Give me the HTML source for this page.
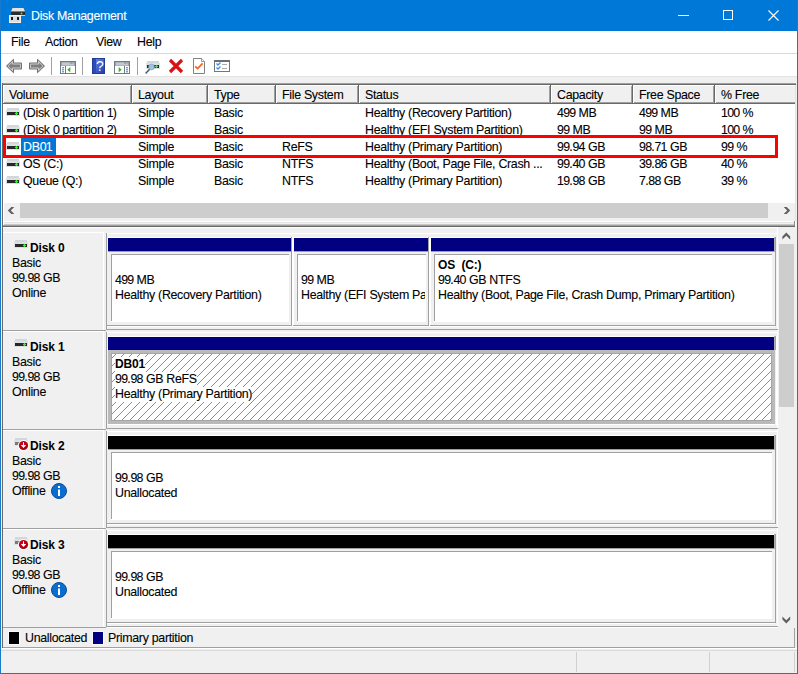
<!DOCTYPE html>
<html><head><meta charset="utf-8">
<style>
*{margin:0;padding:0;box-sizing:border-box}
html,body{width:798px;height:674px;overflow:hidden;background:#f0f0f0}
body{position:relative;font-family:"Liberation Sans",sans-serif;font-size:12.4px;letter-spacing:-0.3px;color:#000;-webkit-text-stroke:0.1px currentColor}
i{font-style:normal;letter-spacing:-0.75px}
.a{position:absolute}
.t{position:absolute;white-space:nowrap;line-height:15px}
.b{position:absolute;white-space:nowrap;line-height:15px;font-weight:bold;font-size:12px;letter-spacing:-0.15px;-webkit-text-stroke:0}
svg{position:absolute;overflow:visible}
</style></head><body>
<div class="a" style="left:0px;top:0px;width:798px;height:31px;background:#0078d7;"></div>
<svg style="left:0px;top:0px" width="30" height="30" viewBox="0 0 30 30">
<path d="M12.5 8 H23.5 L25 11.5 H11 Z" fill="#e4e4e4"/>
<rect x="11" y="11.7" width="14" height="3.3" fill="#2c2c2c"/>
<rect x="11" y="15" width="14" height="1" fill="#cfcfcf"/>
<circle cx="21.5" cy="13.4" r="1" fill="#3cf03c"/>
<rect x="9" y="15" width="12" height="8" fill="#dcdcdc"/>
<rect x="9.5" y="15.5" width="11" height="7" fill="none" stroke="#f2f2f2" stroke-width="1"/>
<rect x="11" y="17" width="2" height="3" fill="#1c1c1c"/>
<rect x="17" y="17" width="2" height="3" fill="#1c1c1c"/>
</svg>
<div class="t" style="left:31px;top:9px;color:#fff">Disk Management</div>
<svg style="left:678px;top:15px" width="11" height="1"><rect width="11" height="1" fill="#fff"/></svg>
<svg style="left:723px;top:10px" width="11" height="11"><rect x="0.5" y="0.5" width="9" height="9" fill="none" stroke="#fff" stroke-width="1"/></svg>
<svg style="left:768px;top:10px" width="12" height="12"><path d="M0.5 0.5 L10.5 10.5 M10.5 0.5 L0.5 10.5" stroke="#fff" stroke-width="1.1"/></svg>
<div class="a" style="left:0px;top:0px;width:1px;height:674px;background:#1979ca;"></div>
<div class="a" style="left:797px;top:0px;width:1px;height:674px;background:#1979ca;"></div>
<div class="a" style="left:0px;top:673px;width:798px;height:1px;background:#1979ca;"></div>
<div class="a" style="left:1px;top:31px;width:796px;height:22px;background:#fff;"></div>
<div class="t" style="left:11px;top:35px;">File</div>
<div class="t" style="left:45px;top:35px;">Action</div>
<div class="t" style="left:96px;top:35px;">View</div>
<div class="t" style="left:137px;top:35px;">Help</div>
<div class="a" style="left:1px;top:53px;width:796px;height:1px;background:#d9d9d9;"></div>
<div class="a" style="left:1px;top:54px;width:796px;height:22px;background:#fff;"></div>
<div class="a" style="left:1px;top:76px;width:796px;height:1px;background:#e3e3e3;"></div>
<div class="a" style="left:1px;top:77px;width:796px;height:6px;background:#f0f0f0;"></div>

<svg style="left:6px;top:58px" width="17" height="16" viewBox="0 0 17 16">
<defs><linearGradient id="ga" x1="0" y1="0" x2="0" y2="1"><stop offset="0" stop-color="#b0b0b0"/><stop offset="0.5" stop-color="#7a7a7a"/><stop offset="1" stop-color="#b0b0b0"/></linearGradient></defs>
<path d="M0.5 8 L7.5 1.3 V5 H15.5 V11 H7.5 V14.7 Z" fill="url(#ga)" stroke="#707070" stroke-width="1" stroke-linejoin="round"/><path d="M2 8 L6.5 3.6 V6 H14.5 V10 H6.5 V12.4 Z" fill="none" stroke="#e0e0e0" stroke-width="0.7"/></svg>
<svg style="left:28px;top:58px" width="17" height="16" viewBox="0 0 17 16">
<path d="M16.5 8 L9.5 1.3 V5 H1.5 V11 H9.5 V14.7 Z" fill="url(#ga)" stroke="#707070" stroke-width="1" stroke-linejoin="round"/><path d="M15 8 L10.5 3.6 V6 H2.5 V10 H10.5 V12.4 Z" fill="none" stroke="#e0e0e0" stroke-width="0.7"/></svg>
<svg style="left:51px;top:57px" width="1" height="18"><rect width="1" height="18" fill="#a0a0a0"/></svg>
<svg style="left:60px;top:61px" width="16" height="13" viewBox="0 0 16 13">
<rect x="0.5" y="0.5" width="15" height="12" fill="#fff" stroke="#737b88"/><rect x="1" y="1" width="14" height="4" fill="#7d8593"/>
<rect x="1.5" y="1.5" width="9" height="1.2" fill="#dfe4ea"/><rect x="11.5" y="1.5" width="1.2" height="1.2" fill="#dfe4ea"/><rect x="13.3" y="1.5" width="1.2" height="1.2" fill="#dfe4ea"/>
<rect x="1.5" y="3.3" width="13" height="1.2" fill="#dfe4ea"/><rect x="5" y="5" width="1" height="7" fill="#737b88"/>
<rect x="2" y="6.3" width="2" height="1" fill="#3a78c8"/><rect x="2" y="8.3" width="2" height="1" fill="#3a78c8"/><rect x="2" y="10.3" width="2" height="1" fill="#3a78c8"/>
<path d="M10.3 6 L7.3 8.7 L10.3 11.3 Z" fill="#2fb02f"/></svg>
<svg style="left:82px;top:57px" width="1" height="18"><rect width="1" height="18" fill="#a0a0a0"/></svg>
<svg style="left:92px;top:58px" width="14" height="16" viewBox="0 0 14 16">
<defs><linearGradient id="gh" x1="0" y1="0" x2="1" y2="1"><stop offset="0" stop-color="#6d8fe8"/><stop offset="1" stop-color="#1c3aa8"/></linearGradient></defs>
<rect x="0.5" y="0.5" width="12" height="15" fill="url(#gh)" stroke="#203c9c"/>
<rect x="1" y="1" width="3" height="14" fill="#2a4bb8"/><text x="7.8" y="13" font-family="Liberation Sans" font-size="14" fill="#fff" text-anchor="middle" style="-webkit-text-stroke:0.3px #fff">?</text></svg>
<svg style="left:114px;top:61px" width="16" height="13" viewBox="0 0 16 13">
<rect x="0.5" y="0.5" width="15" height="12" fill="#fff" stroke="#737b88"/><rect x="1" y="1" width="14" height="4" fill="#7d8593"/>
<rect x="1.5" y="1.5" width="9" height="1.2" fill="#dfe4ea"/><rect x="11.5" y="1.5" width="1.2" height="1.2" fill="#dfe4ea"/><rect x="13.3" y="1.5" width="1.2" height="1.2" fill="#dfe4ea"/>
<rect x="1.5" y="3.3" width="13" height="1.2" fill="#dfe4ea"/><rect x="10" y="5" width="1" height="7" fill="#737b88"/>
<rect x="12" y="6.3" width="2" height="1" fill="#3a78c8"/><rect x="12" y="8.3" width="2" height="1" fill="#3a78c8"/><rect x="12" y="10.3" width="2" height="1" fill="#3a78c8"/>
<path d="M4.7 6 L7.7 8.7 L4.7 11.3 Z" fill="#2fb02f"/></svg>
<svg style="left:137px;top:57px" width="1" height="18"><rect width="1" height="18" fill="#a0a0a0"/></svg>
<svg style="left:140px;top:56px" width="24" height="20" viewBox="0 0 24 20">
<rect x="7" y="5" width="12" height="2.5" fill="#d3d6da"/><rect x="6" y="7" width="14" height="6" fill="#dde0e3"/><rect x="7" y="9" width="12" height="3" fill="#282828"/>
<rect x="15.5" y="9.5" width="2" height="2" fill="#33ee33"/><rect x="16" y="9" width="1" height="3" fill="#33ee33"/><rect x="15" y="10" width="3" height="1" fill="#33ee33"/>
<circle cx="11.5" cy="11" r="2.9" fill="#9fc3e3" stroke="#7d9dbb" stroke-width="0.6"/><path d="M9.6 13.3 L5.6 17.6" stroke="#3f5878" stroke-width="1.5"/></svg>
<svg style="left:168px;top:58px" width="16" height="16" viewBox="0 0 16 16">
<path d="M2 2 L14 14 M14 2 L2 14" stroke="#d81313" stroke-width="3.2"/></svg>
<svg style="left:193px;top:58px" width="13" height="16" viewBox="0 0 13 16">
<path d="M0.5 0.5 H8.5 L11.5 3.5 V15.5 H0.5 Z" fill="#fff" stroke="#808080"/><path d="M8.5 0.5 V3.5 H11.5" fill="#f4f4f4" stroke="#808080" stroke-width="0.8"/>
<path d="M2.2 8.3 L4.6 10.6 L9.6 5.3" fill="none" stroke="#f0641e" stroke-width="1.7"/></svg>
<svg style="left:214px;top:60px" width="16" height="12" viewBox="0 0 16 12">
<rect x="0.5" y="0.5" width="15" height="11" fill="#fff" stroke="#777"/><rect x="0" y="0" width="16" height="2" fill="#6e6e6e"/>
<path d="M2.5 3.5 L4 5 L6.5 2.5 M2.5 7.5 L4 9 L6.5 6.5" fill="none" stroke="#3c8fe6" stroke-width="1.3"/>
<rect x="8" y="4" width="5" height="1" fill="#aaa"/><rect x="8" y="8" width="5" height="1" fill="#aaa"/></svg>

<div class="a" style="left:2px;top:83px;width:794px;height:143px;background:#fff;"></div>
<div class="a" style="left:2px;top:83px;width:794px;height:1px;background:#a0a0a0;"></div>
<div class="a" style="left:2px;top:84px;width:794px;height:1px;background:#696969;"></div>
<div class="a" style="left:2px;top:83px;width:1px;height:566px;background:#696969;"></div>
<div class="a" style="left:3px;top:85px;width:792px;height:18px;background:#f0f0f0;"></div>
<div class="a" style="left:3px;top:85px;width:792px;height:1px;background:#fff;"></div>
<div class="a" style="left:3px;top:102px;width:792px;height:1px;background:#a0a0a0;"></div>
<div class="a" style="left:3px;top:103px;width:792px;height:1px;background:#696969;"></div>
<div class="a" style="left:3px;top:85px;width:1px;height:18px;background:#fff;"></div>
<div class="a" style="left:130px;top:86px;width:1px;height:17px;background:#a0a0a0;"></div>
<div class="a" style="left:131px;top:85px;width:1px;height:18px;background:#696969;"></div>
<div class="a" style="left:132px;top:86px;width:1px;height:17px;background:#fff;"></div>
<div class="a" style="left:206px;top:86px;width:1px;height:17px;background:#a0a0a0;"></div>
<div class="a" style="left:207px;top:85px;width:1px;height:18px;background:#696969;"></div>
<div class="a" style="left:208px;top:86px;width:1px;height:17px;background:#fff;"></div>
<div class="a" style="left:274px;top:86px;width:1px;height:17px;background:#a0a0a0;"></div>
<div class="a" style="left:275px;top:85px;width:1px;height:18px;background:#696969;"></div>
<div class="a" style="left:276px;top:86px;width:1px;height:17px;background:#fff;"></div>
<div class="a" style="left:357px;top:86px;width:1px;height:17px;background:#a0a0a0;"></div>
<div class="a" style="left:358px;top:85px;width:1px;height:18px;background:#696969;"></div>
<div class="a" style="left:359px;top:86px;width:1px;height:17px;background:#fff;"></div>
<div class="a" style="left:549px;top:86px;width:1px;height:17px;background:#a0a0a0;"></div>
<div class="a" style="left:550px;top:85px;width:1px;height:18px;background:#696969;"></div>
<div class="a" style="left:551px;top:86px;width:1px;height:17px;background:#fff;"></div>
<div class="a" style="left:631px;top:86px;width:1px;height:17px;background:#a0a0a0;"></div>
<div class="a" style="left:632px;top:85px;width:1px;height:18px;background:#696969;"></div>
<div class="a" style="left:633px;top:86px;width:1px;height:17px;background:#fff;"></div>
<div class="a" style="left:713px;top:86px;width:1px;height:17px;background:#a0a0a0;"></div>
<div class="a" style="left:714px;top:85px;width:1px;height:18px;background:#696969;"></div>
<div class="a" style="left:715px;top:86px;width:1px;height:17px;background:#fff;"></div>
<div class="t" style="left:9px;top:88px;">Volume</div>
<div class="t" style="left:138px;top:88px;">Layout</div>
<div class="t" style="left:214px;top:88px;">Type</div>
<div class="t" style="left:282px;top:88px;">File System</div>
<div class="t" style="left:365px;top:88px;">Status</div>
<div class="t" style="left:557px;top:88px;">Capacity</div>
<div class="t" style="left:639px;top:88px;">Free Space</div>
<div class="t" style="left:721px;top:88px;">% Free</div>
<svg style="left:6px;top:108px" width="14" height="9" viewBox="0 0 14 9">
<rect x="1" y="0" width="12" height="2.5" fill="#d3d6da"/>
<rect x="0" y="2" width="14" height="6" fill="#dde0e3"/>
<rect x="1" y="4" width="12" height="3" fill="#282828"/>
<rect x="9.5" y="4.5" width="2" height="2" fill="#33ee33"/><rect x="10" y="4" width="1" height="3" fill="#33ee33"/><rect x="9" y="5" width="3" height="1" fill="#33ee33"/></svg>
<div class="t" style="left:23px;top:106px;">(Disk <i>0</i> partition <i>1</i>)</div>
<div class="t" style="left:138px;top:106px;">Simple</div>
<div class="t" style="left:214px;top:106px;">Basic</div>
<div class="t" style="left:365px;top:106px;">Healthy (Recovery Partition)</div>
<div class="t" style="left:557px;top:106px;"><i>499</i> MB</div>
<div class="t" style="left:639px;top:106px;"><i>499</i> MB</div>
<div class="t" style="left:721px;top:106px;"><i>100</i> %</div>
<svg style="left:6px;top:125px" width="14" height="9" viewBox="0 0 14 9">
<rect x="1" y="0" width="12" height="2.5" fill="#d3d6da"/>
<rect x="0" y="2" width="14" height="6" fill="#dde0e3"/>
<rect x="1" y="4" width="12" height="3" fill="#282828"/>
<rect x="9.5" y="4.5" width="2" height="2" fill="#33ee33"/><rect x="10" y="4" width="1" height="3" fill="#33ee33"/><rect x="9" y="5" width="3" height="1" fill="#33ee33"/></svg>
<div class="t" style="left:23px;top:123px;">(Disk <i>0</i> partition <i>2</i>)</div>
<div class="t" style="left:138px;top:123px;">Simple</div>
<div class="t" style="left:214px;top:123px;">Basic</div>
<div class="t" style="left:365px;top:123px;">Healthy (EFI System Partition)</div>
<div class="t" style="left:557px;top:123px;"><i>99</i> MB</div>
<div class="t" style="left:639px;top:123px;"><i>99</i> MB</div>
<div class="t" style="left:721px;top:123px;"><i>100</i> %</div>
<svg style="left:6px;top:142px" width="14" height="9" viewBox="0 0 14 9">
<rect x="1" y="0" width="12" height="2.5" fill="#d3d6da"/>
<rect x="0" y="2" width="14" height="6" fill="#dde0e3"/>
<rect x="1" y="4" width="12" height="3" fill="#282828"/>
<rect x="9.5" y="4.5" width="2" height="2" fill="#33ee33"/><rect x="10" y="4" width="1" height="3" fill="#33ee33"/><rect x="9" y="5" width="3" height="1" fill="#33ee33"/></svg>
<div class="a" style="left:21px;top:138px;width:35px;height:17px;background:#0078d7;"></div>
<div class="t" style="left:23px;top:140px;color:#fff">DB<i>01</i></div>
<div class="t" style="left:138px;top:140px;">Simple</div>
<div class="t" style="left:214px;top:140px;">Basic</div>
<div class="t" style="left:282px;top:140px;">ReFS</div>
<div class="t" style="left:365px;top:140px;">Healthy (Primary Partition)</div>
<div class="t" style="left:557px;top:140px;"><i>99</i>.<i>94</i> GB</div>
<div class="t" style="left:639px;top:140px;"><i>98</i>.<i>71</i> GB</div>
<div class="t" style="left:721px;top:140px;"><i>99</i> %</div>
<svg style="left:6px;top:159px" width="14" height="9" viewBox="0 0 14 9">
<rect x="1" y="0" width="12" height="2.5" fill="#d3d6da"/>
<rect x="0" y="2" width="14" height="6" fill="#dde0e3"/>
<rect x="1" y="4" width="12" height="3" fill="#282828"/>
<rect x="9.5" y="4.5" width="2" height="2" fill="#33ee33"/><rect x="10" y="4" width="1" height="3" fill="#33ee33"/><rect x="9" y="5" width="3" height="1" fill="#33ee33"/></svg>
<div class="t" style="left:23px;top:157px;">OS (C:)</div>
<div class="t" style="left:138px;top:157px;">Simple</div>
<div class="t" style="left:214px;top:157px;">Basic</div>
<div class="t" style="left:282px;top:157px;">NTFS</div>
<div class="t" style="left:365px;top:157px;">Healthy (Boot, Page File, Crash ...</div>
<div class="t" style="left:557px;top:157px;"><i>99</i>.<i>40</i> GB</div>
<div class="t" style="left:639px;top:157px;"><i>39</i>.<i>86</i> GB</div>
<div class="t" style="left:721px;top:157px;"><i>40</i> %</div>
<svg style="left:6px;top:176px" width="14" height="9" viewBox="0 0 14 9">
<rect x="1" y="0" width="12" height="2.5" fill="#d3d6da"/>
<rect x="0" y="2" width="14" height="6" fill="#dde0e3"/>
<rect x="1" y="4" width="12" height="3" fill="#282828"/>
<rect x="9.5" y="4.5" width="2" height="2" fill="#33ee33"/><rect x="10" y="4" width="1" height="3" fill="#33ee33"/><rect x="9" y="5" width="3" height="1" fill="#33ee33"/></svg>
<div class="t" style="left:23px;top:174px;">Queue (Q:)</div>
<div class="t" style="left:138px;top:174px;">Simple</div>
<div class="t" style="left:214px;top:174px;">Basic</div>
<div class="t" style="left:282px;top:174px;">NTFS</div>
<div class="t" style="left:365px;top:174px;">Healthy (Primary Partition)</div>
<div class="t" style="left:557px;top:174px;"><i>19</i>.<i>98</i> GB</div>
<div class="t" style="left:639px;top:174px;"><i>7</i>.<i>88</i> GB</div>
<div class="t" style="left:721px;top:174px;"><i>39</i> %</div>
<div class="a" style="left:3px;top:135px;width:775px;height:23px;border:3px solid #f00"></div>
<div class="a" style="left:4px;top:203px;width:791px;height:22px;background:#f0f0f0;"></div>
<div class="a" style="left:3px;top:203px;width:1px;height:22px;background:#fff;"></div>
<div class="a" style="left:20px;top:203px;width:748px;height:15px;background:#cdcdcd;"></div>
<svg style="left:7px;top:206px" width="8" height="9"><polygon points="0.8,4.5 4.3,1 7.3,1 3.8,4.5 7.3,8 4.3,8" fill="#606060"/></svg>
<svg style="left:783px;top:206px" width="8" height="9"><polygon points="7.2,4.5 3.7,1 0.7,1 4.2,4.5 0.7,8 3.7,8" fill="#606060"/></svg>
<div class="a" style="left:3px;top:221px;width:792px;height:1px;background:#fff;"></div>
<div class="a" style="left:4px;top:222px;width:791px;height:1px;background:#e3e3e3;"></div>
<div class="a" style="left:4px;top:224px;width:791px;height:1px;background:#c8c8c8;"></div>
<div class="a" style="left:795px;top:85px;width:1px;height:136px;background:#e3e3e3;"></div>
<div class="a" style="left:3px;top:225px;width:792px;height:1px;background:#a0a0a0;"></div>
<div class="a" style="left:2px;top:226px;width:793px;height:1px;background:#696969;"></div>
<div class="a" style="left:794px;top:221px;width:1px;height:5px;background:#8a8a8a;"></div>
<div class="a" style="left:3px;top:227px;width:792px;height:400px;background:#f0f0f0;"></div>
<div class="a" style="left:3px;top:227px;width:775px;height:1px;background:#fff;"></div>
<div class="a" style="left:778px;top:227px;width:17px;height:400px;background:#f0f0f0;"></div>
<div class="a" style="left:779px;top:244px;width:15px;height:163px;background:#cdcdcd;"></div>
<div class="a" style="left:777px;top:227px;width:1px;height:400px;background:#fff;"></div>
<svg style="left:782px;top:232px" width="9" height="8"><polygon points="4.3,0.6 8.2,4.5 8.2,7.5 4.3,3.8 0.4,7.5 0.4,4.5" fill="#606060"/></svg>
<svg style="left:782px;top:616px" width="9" height="8"><polygon points="4.3,7.4 8.2,3.5 8.2,0.5 4.3,4.2 0.4,0.5 0.4,3.5" fill="#606060"/></svg>
<div class="a" style="left:3px;top:232px;width:101px;height:1px;background:#fff;"></div>
<div class="a" style="left:103px;top:232px;width:1px;height:98px;background:#fff;"></div>
<div class="a" style="left:3px;top:330px;width:103px;height:1px;background:#a0a0a0;"></div>
<div class="a" style="left:106px;top:233px;width:1px;height:97px;background:#a0a0a0;"></div>
<div class="a" style="left:107px;top:233px;width:671px;height:1px;background:#fff;"></div>
<div class="a" style="left:106px;top:329px;width:672px;height:1px;background:#a0a0a0;"></div>
<svg style="left:14px;top:240px" width="14" height="9" viewBox="0 0 14 9">
<rect x="1" y="0" width="12" height="2.5" fill="#d3d6da"/>
<rect x="0" y="2" width="14" height="6" fill="#dde0e3"/>
<rect x="1" y="4" width="12" height="3" fill="#282828"/>
<rect x="9.5" y="4.5" width="2" height="2" fill="#33ee33"/><rect x="10" y="4" width="1" height="3" fill="#33ee33"/><rect x="9" y="5" width="3" height="1" fill="#33ee33"/></svg>
<div class="b" style="left:30px;top:241px;">Disk 0</div>
<div class="t" style="left:12px;top:256px;">Basic</div>
<div class="t" style="left:12px;top:271px;"><i>99</i>.<i>98</i> GB</div>
<div class="t" style="left:12px;top:286px;">Online</div>
<div class="a" style="left:108px;top:237px;width:183px;height:1px;background:#fff;"></div>
<div class="a" style="left:108px;top:238px;width:183px;height:13px;background:#000080;"></div>
<div class="a" style="left:108px;top:251px;width:183px;height:1px;background:#a0a0a0;"></div>
<div class="a" style="left:291px;top:237px;width:1px;height:89px;background:#a0a0a0;"></div>
<div class="a" style="left:107px;top:325px;width:185px;height:1px;background:#a0a0a0;"></div>
<div class="a" style="left:107px;top:326px;width:185px;height:1px;background:#fff;"></div>
<div class="a" style="left:111px;top:254px;width:178px;height:68px;background:#fff;"></div>
<div class="a" style="left:111px;top:254px;width:178px;height:1px;background:#a0a0a0;"></div>
<div class="a" style="left:111px;top:254px;width:1px;height:67px;background:#a0a0a0;"></div>
<div class="t" style="left:115px;top:273px;"><i>499</i> MB</div>
<div class="t" style="left:115px;top:288px;">Healthy (Recovery Partition)</div>
<div class="a" style="left:292px;top:237px;width:1px;height:89px;background:#fff;"></div>
<div class="a" style="left:293px;top:237px;width:1px;height:89px;background:#fff;"></div>
<div class="a" style="left:294px;top:237px;width:134px;height:1px;background:#fff;"></div>
<div class="a" style="left:294px;top:238px;width:134px;height:13px;background:#000080;"></div>
<div class="a" style="left:294px;top:251px;width:134px;height:1px;background:#a0a0a0;"></div>
<div class="a" style="left:428px;top:237px;width:1px;height:89px;background:#a0a0a0;"></div>
<div class="a" style="left:293px;top:325px;width:136px;height:1px;background:#a0a0a0;"></div>
<div class="a" style="left:293px;top:326px;width:136px;height:1px;background:#fff;"></div>
<div class="a" style="left:297px;top:254px;width:129px;height:68px;background:#fff;"></div>
<div class="a" style="left:297px;top:254px;width:129px;height:1px;background:#a0a0a0;"></div>
<div class="a" style="left:297px;top:254px;width:1px;height:67px;background:#a0a0a0;"></div>
<div class="t" style="left:301px;top:273px;"><i>99</i> MB</div>
<div class="t" style="left:301px;top:288px;width:124px;overflow:hidden">Healthy (EFI System Pa</div>
<div class="a" style="left:429px;top:237px;width:1px;height:89px;background:#fff;"></div>
<div class="a" style="left:430px;top:237px;width:1px;height:89px;background:#fff;"></div>
<div class="a" style="left:431px;top:237px;width:343px;height:1px;background:#fff;"></div>
<div class="a" style="left:431px;top:238px;width:343px;height:13px;background:#000080;"></div>
<div class="a" style="left:431px;top:251px;width:343px;height:1px;background:#a0a0a0;"></div>
<div class="a" style="left:774px;top:237px;width:1px;height:15px;background:#b0b0b0;"></div>
<div class="a" style="left:775px;top:237px;width:1px;height:89px;background:#a0a0a0;"></div>
<div class="a" style="left:430px;top:325px;width:345px;height:1px;background:#a0a0a0;"></div>
<div class="a" style="left:430px;top:326px;width:345px;height:1px;background:#fff;"></div>
<div class="a" style="left:434px;top:254px;width:338px;height:68px;background:#fff;"></div>
<div class="a" style="left:434px;top:254px;width:338px;height:1px;background:#a0a0a0;"></div>
<div class="a" style="left:434px;top:254px;width:1px;height:67px;background:#a0a0a0;"></div>
<div class="b" style="left:438px;top:258px;">OS&nbsp;&nbsp;(C:)</div>
<div class="t" style="left:438px;top:273px;"><i>99</i>.<i>40</i> GB NTFS</div>
<div class="t" style="left:438px;top:288px;">Healthy (Boot, Page File, Crash Dump, Primary Partition)</div>
<div class="a" style="left:3px;top:331px;width:101px;height:1px;background:#fff;"></div>
<div class="a" style="left:103px;top:331px;width:1px;height:98px;background:#fff;"></div>
<div class="a" style="left:3px;top:429px;width:103px;height:1px;background:#a0a0a0;"></div>
<div class="a" style="left:106px;top:332px;width:1px;height:97px;background:#a0a0a0;"></div>
<div class="a" style="left:107px;top:332px;width:671px;height:1px;background:#fff;"></div>
<div class="a" style="left:106px;top:428px;width:672px;height:1px;background:#a0a0a0;"></div>
<svg style="left:14px;top:339px" width="14" height="9" viewBox="0 0 14 9">
<rect x="1" y="0" width="12" height="2.5" fill="#d3d6da"/>
<rect x="0" y="2" width="14" height="6" fill="#dde0e3"/>
<rect x="1" y="4" width="12" height="3" fill="#282828"/>
<rect x="9.5" y="4.5" width="2" height="2" fill="#33ee33"/><rect x="10" y="4" width="1" height="3" fill="#33ee33"/><rect x="9" y="5" width="3" height="1" fill="#33ee33"/></svg>
<div class="b" style="left:30px;top:340px;">Disk 1</div>
<div class="t" style="left:12px;top:355px;">Basic</div>
<div class="t" style="left:12px;top:370px;"><i>99</i>.<i>98</i> GB</div>
<div class="t" style="left:12px;top:385px;">Online</div>
<div class="a" style="left:108px;top:336px;width:666px;height:1px;background:#fff;"></div>
<div class="a" style="left:108px;top:337px;width:666px;height:13px;background:#000080;"></div>
<div class="a" style="left:108px;top:350px;width:666px;height:1px;background:#a0a0a0;"></div>
<div class="a" style="left:774px;top:336px;width:1px;height:15px;background:#b0b0b0;"></div>
<div class="a" style="left:775px;top:336px;width:1px;height:14px;background:#a0a0a0;"></div>
<div class="a" style="left:107px;top:424px;width:668px;height:1px;background:#fff;"></div>
<div class="a" style="left:776px;top:336px;width:1px;height:89px;background:#fff;"></div>
<div class="a" style="left:108px;top:350px;width:667px;height:74px;background:#bababa;"></div>
<div class="a" style="left:111px;top:353px;width:661px;height:68px;background:#a6a6a6;"></div>
<svg style="left:112px;top:354px" width="659" height="66"><defs><pattern id="hp" width="8" height="8" patternUnits="userSpaceOnUse"><rect width="8" height="8" fill="#fff"/><rect x="3" y="0" width="1" height="1" fill="#8a8a8a"/><rect x="2" y="1" width="1" height="1" fill="#8a8a8a"/><rect x="1" y="2" width="1" height="1" fill="#8a8a8a"/><rect x="0" y="3" width="1" height="1" fill="#8a8a8a"/><rect x="7" y="4" width="1" height="1" fill="#8a8a8a"/><rect x="6" y="5" width="1" height="1" fill="#8a8a8a"/><rect x="5" y="6" width="1" height="1" fill="#8a8a8a"/><rect x="4" y="7" width="1" height="1" fill="#8a8a8a"/></pattern></defs><rect width="100%" height="100%" fill="url(#hp)"/></svg>
<div class="b" style="left:115px;top:357px;background:#fff;padding-bottom:1px">DB01</div>
<div class="t" style="left:115px;top:372px;background:#fff"><i>99</i>.<i>98</i> GB ReFS</div>
<div class="t" style="left:115px;top:387px;background:#fff">Healthy (Primary Partition)</div>
<div class="a" style="left:3px;top:430px;width:101px;height:1px;background:#fff;"></div>
<div class="a" style="left:103px;top:430px;width:1px;height:98px;background:#fff;"></div>
<div class="a" style="left:3px;top:528px;width:103px;height:1px;background:#a0a0a0;"></div>
<div class="a" style="left:106px;top:431px;width:1px;height:97px;background:#a0a0a0;"></div>
<div class="a" style="left:107px;top:431px;width:671px;height:1px;background:#fff;"></div>
<div class="a" style="left:106px;top:527px;width:672px;height:1px;background:#a0a0a0;"></div>
<svg style="left:14px;top:438px" width="14" height="9" viewBox="0 0 14 9">
<rect x="1" y="0" width="12" height="2.5" fill="#d3d6da"/>
<rect x="0" y="2" width="14" height="6" fill="#dde0e3"/>
<rect x="1" y="4" width="12" height="3" fill="#7a7a7a"/>
<rect x="9.5" y="4.5" width="2" height="2" fill="#7a7a7a"/><rect x="10" y="4" width="1" height="3" fill="#7a7a7a"/><rect x="9" y="5" width="3" height="1" fill="#7a7a7a"/></svg>
<svg style="left:17px;top:439px" width="13" height="13" viewBox="0 0 13 13"><defs><radialGradient id="rg2" cx="0.45" cy="0.4" r="0.6"><stop offset="0" stop-color="#e8001c"/><stop offset="1" stop-color="#9a0010"/></radialGradient></defs><circle cx="6.5" cy="6.5" r="5.6" fill="#fff"/><circle cx="6.5" cy="6.5" r="4.6" fill="url(#rg2)"/><path d="M6 3.3 H7 V6 H9.2 L6.5 9 L3.8 6 H6 Z" fill="#fff"/></svg>
<div class="b" style="left:30px;top:439px;">Disk 2</div>
<div class="t" style="left:12px;top:454px;">Basic</div>
<div class="t" style="left:12px;top:469px;"><i>99</i>.<i>98</i> GB</div>
<div class="t" style="left:12px;top:484px;">Offline</div>
<svg style="left:51px;top:483px" width="16" height="16" viewBox="0 0 16 16"><circle cx="8" cy="8" r="7.5" fill="#0a6ed0" stroke="#0b4c92" stroke-width="1"/><rect x="7" y="3" width="2" height="2" fill="#fff"/><rect x="7" y="6.5" width="2" height="6.5" fill="#fff"/></svg>
<div class="a" style="left:108px;top:435px;width:666px;height:1px;background:#fff;"></div>
<div class="a" style="left:108px;top:436px;width:666px;height:13px;background:#000;"></div>
<div class="a" style="left:108px;top:449px;width:666px;height:1px;background:#a0a0a0;"></div>
<div class="a" style="left:774px;top:435px;width:1px;height:15px;background:#b0b0b0;"></div>
<div class="a" style="left:775px;top:435px;width:1px;height:89px;background:#a0a0a0;"></div>
<div class="a" style="left:107px;top:523px;width:668px;height:1px;background:#a0a0a0;"></div>
<div class="a" style="left:107px;top:524px;width:668px;height:1px;background:#fff;"></div>
<div class="a" style="left:111px;top:452px;width:661px;height:68px;background:#fff;"></div>
<div class="a" style="left:111px;top:452px;width:661px;height:1px;background:#a0a0a0;"></div>
<div class="a" style="left:111px;top:452px;width:1px;height:67px;background:#a0a0a0;"></div>
<div class="t" style="left:115px;top:471px;"><i>99</i>.<i>98</i> GB</div>
<div class="t" style="left:115px;top:486px;">Unallocated</div>
<div class="a" style="left:3px;top:529px;width:101px;height:1px;background:#fff;"></div>
<div class="a" style="left:103px;top:529px;width:1px;height:98px;background:#fff;"></div>
<div class="a" style="left:3px;top:627px;width:103px;height:1px;background:#a0a0a0;"></div>
<div class="a" style="left:106px;top:530px;width:1px;height:97px;background:#a0a0a0;"></div>
<div class="a" style="left:107px;top:530px;width:671px;height:1px;background:#fff;"></div>
<div class="a" style="left:106px;top:626px;width:672px;height:1px;background:#a0a0a0;"></div>
<svg style="left:14px;top:537px" width="14" height="9" viewBox="0 0 14 9">
<rect x="1" y="0" width="12" height="2.5" fill="#d3d6da"/>
<rect x="0" y="2" width="14" height="6" fill="#dde0e3"/>
<rect x="1" y="4" width="12" height="3" fill="#7a7a7a"/>
<rect x="9.5" y="4.5" width="2" height="2" fill="#7a7a7a"/><rect x="10" y="4" width="1" height="3" fill="#7a7a7a"/><rect x="9" y="5" width="3" height="1" fill="#7a7a7a"/></svg>
<svg style="left:17px;top:538px" width="13" height="13" viewBox="0 0 13 13"><defs><radialGradient id="rg3" cx="0.45" cy="0.4" r="0.6"><stop offset="0" stop-color="#e8001c"/><stop offset="1" stop-color="#9a0010"/></radialGradient></defs><circle cx="6.5" cy="6.5" r="5.6" fill="#fff"/><circle cx="6.5" cy="6.5" r="4.6" fill="url(#rg3)"/><path d="M6 3.3 H7 V6 H9.2 L6.5 9 L3.8 6 H6 Z" fill="#fff"/></svg>
<div class="b" style="left:30px;top:538px;">Disk 3</div>
<div class="t" style="left:12px;top:553px;">Basic</div>
<div class="t" style="left:12px;top:568px;"><i>99</i>.<i>98</i> GB</div>
<div class="t" style="left:12px;top:583px;">Offline</div>
<svg style="left:51px;top:582px" width="16" height="16" viewBox="0 0 16 16"><circle cx="8" cy="8" r="7.5" fill="#0a6ed0" stroke="#0b4c92" stroke-width="1"/><rect x="7" y="3" width="2" height="2" fill="#fff"/><rect x="7" y="6.5" width="2" height="6.5" fill="#fff"/></svg>
<div class="a" style="left:108px;top:534px;width:666px;height:1px;background:#fff;"></div>
<div class="a" style="left:108px;top:535px;width:666px;height:13px;background:#000;"></div>
<div class="a" style="left:108px;top:548px;width:666px;height:1px;background:#a0a0a0;"></div>
<div class="a" style="left:774px;top:534px;width:1px;height:15px;background:#b0b0b0;"></div>
<div class="a" style="left:775px;top:534px;width:1px;height:89px;background:#a0a0a0;"></div>
<div class="a" style="left:107px;top:622px;width:668px;height:1px;background:#a0a0a0;"></div>
<div class="a" style="left:107px;top:623px;width:668px;height:1px;background:#fff;"></div>
<div class="a" style="left:111px;top:551px;width:661px;height:68px;background:#fff;"></div>
<div class="a" style="left:111px;top:551px;width:661px;height:1px;background:#a0a0a0;"></div>
<div class="a" style="left:111px;top:551px;width:1px;height:67px;background:#a0a0a0;"></div>
<div class="t" style="left:115px;top:570px;"><i>99</i>.<i>98</i> GB</div>
<div class="t" style="left:115px;top:585px;">Unallocated</div>
<div class="a" style="left:3px;top:628px;width:792px;height:20px;background:#f0f0f0;"></div>
<div class="a" style="left:107px;top:627px;width:671px;height:1px;background:#fff;"></div>
<div class="a" style="left:794px;top:628px;width:1px;height:20px;background:#a0a0a0;"></div>
<div class="a" style="left:3px;top:647px;width:792px;height:1px;background:#a0a0a0;"></div>
<div class="a" style="left:8px;top:631px;width:12px;height:14px;background:#fafafa;"></div>
<div class="a" style="left:9px;top:632px;width:10px;height:12px;background:#000;"></div>
<div class="t" style="left:25px;top:631px;">Unallocated</div>
<div class="a" style="left:92px;top:631px;width:12px;height:14px;background:#fafafa;"></div>
<div class="a" style="left:93px;top:632px;width:10px;height:12px;background:#000080;"></div>
<div class="t" style="left:108px;top:631px;">Primary partition</div>
<div class="a" style="left:1px;top:648px;width:796px;height:25px;background:#f0f0f0;"></div>
<div class="a" style="left:1px;top:648px;width:796px;height:1px;background:#fff;"></div>
<div class="a" style="left:1px;top:650px;width:796px;height:1px;background:#dadada;"></div>
<div class="a" style="left:576px;top:652px;width:1px;height:20px;background:#d0d0d0;"></div>
<div class="a" style="left:709px;top:652px;width:1px;height:20px;background:#d0d0d0;"></div>
<div class="a" style="left:794px;top:652px;width:1px;height:20px;background:#d0d0d0;"></div>
</body></html>
